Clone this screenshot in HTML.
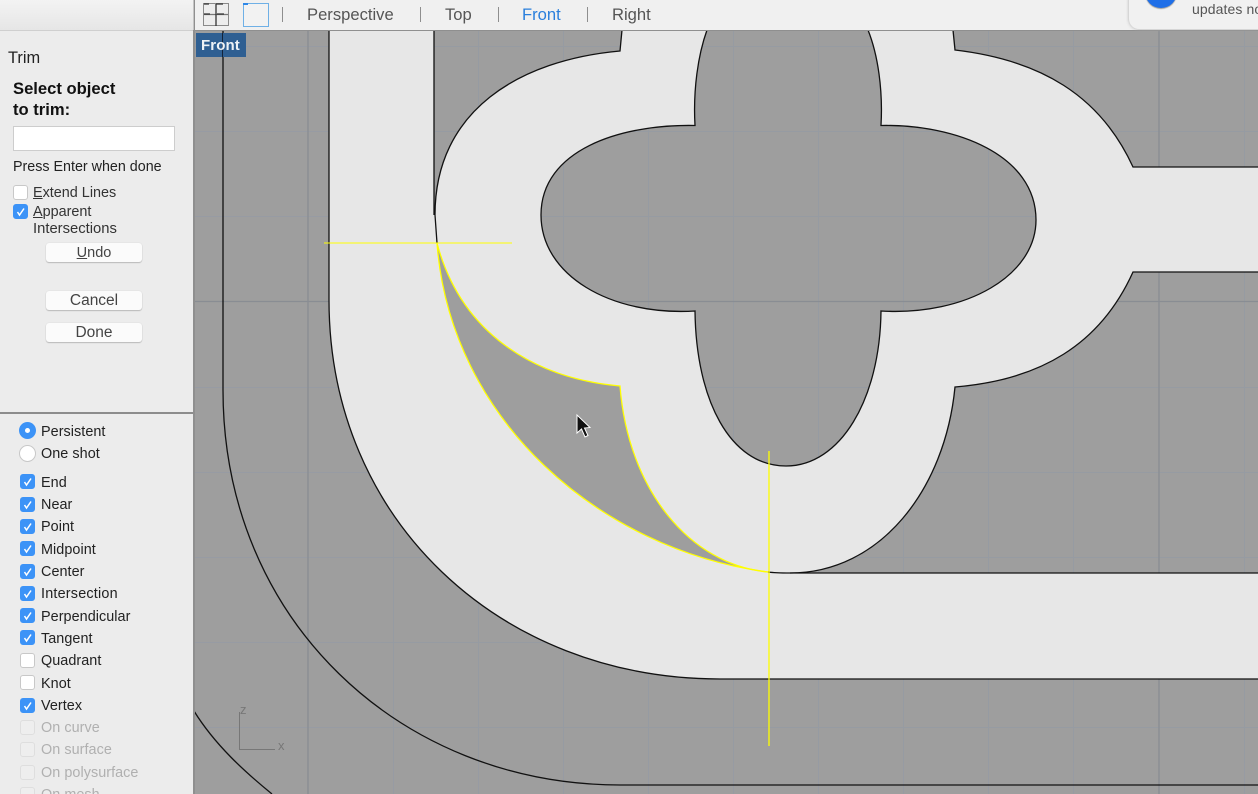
<!DOCTYPE html>
<html><head><meta charset="utf-8"><style>
html,body{margin:0;padding:0;width:1258px;height:794px;overflow:hidden}
body{position:relative;background:#9e9e9e;font-family:"Liberation Sans",sans-serif;color:#1c1c1c}
.a{position:absolute;white-space:nowrap;line-height:18px}
.side{position:absolute;left:0;top:0;width:193px;height:794px;background:#ececec}
.cb{position:absolute;width:13px;height:13px;background:#fff;border:1px solid #c8c8c8;border-radius:3px}
.cb.on{background:#3c93f7;border-color:#3c93f7}
.cb.on svg{position:absolute;left:0;top:0}
.cb.off{background:#eee;border-color:#dedede}
.l{position:absolute;left:41px;font-size:14.400px;line-height:18px;white-space:nowrap;color:#222;letter-spacing:.05px;margin-top:1px}
.l.off{color:#b0b0b0}
.btn{position:absolute;left:46px;width:96px;height:19px;background:#fbfbfb;border-radius:3px;box-shadow:0 1px 1px #b9b9b9,0 0 1px #c8c8c8;text-align:center;font-size:15.500px;line-height:20px;color:#444}
.tab{position:absolute;top:5px;font-size:16.600px;line-height:20px;color:#555;white-space:nowrap}
.sep{position:absolute;top:7px;width:1px;height:15px;background:#8e8e8e}
</style></head><body>
<svg width="1258" height="794" viewBox="0 0 1258 794" style="position:absolute;left:0;top:0">
<rect width="1258" height="794" fill="#9e9e9e"/>
<g stroke="#929aa6" stroke-width="1" fill="none" opacity=".6">
<path d="M393.500 30V794M478.500 30V794M563.500 30V794M648.500 30V794M733.500 30V794M818.500 30V794M903.500 30V794M988.500 30V794M1073.500 30V794M1244.500 30V794"/>
<path d="M194 46.500H1258M194 131.500H1258M194 216.500H1258M194 387.500H1258M194 472.500H1258M194 557.500H1258M194 642.500H1258M194 727.500H1258"/>
</g>
<path d="M308 30V794M1159 30V794M194 301.500H1258" stroke="#898d93" stroke-width="1.300" fill="none"/>
<path d="M329 30V300C329 520 500 679 720 679H1258V573H790C880 573 945 490 955 387C1040 380 1100 345 1133 272H1258V167H1133C1100 95 1040 60 955 50L953 30H868C878 55 883 90 881 125.500C956 124 1036 155 1036 220C1036 275 967 316 881 311C880 400 840 466 786 466C730 466 696 400 695 311C610 316 541 275 541 215C541 150 620 124 695 125.500C693 90 698 55 707 30H622L620 51C520 60 435 110 435 215L434 215V30Z" fill="#e7e7e7"/>
<path d="M437 243C460 330 530 378 620 386C628 490 690 565 768 572C600 550 450 420 437 243Z" fill="#9e9e9e"/>
<g fill="none" stroke="#111" stroke-width="1.300">
<path d="M434 30V215"/>
<path d="M329 30V300C329 520 500 679 720 679H1258"/>
<path d="M768 572C775 573 782 573 790 573H1258"/>
<path d="M790 573C880 573 945 490 955 387C1040 380 1100 345 1133 272H1258M1258 167H1133C1100 95 1040 60 955 50L953 30"/>
<path d="M622 30L620 51C520 60 435 110 435 215L437 243"/>
<path d="M868 30C878 55 883 90 881 125.500C956 124 1036 155 1036 220C1036 275 967 316 881 311C880 400 840 466 786 466C730 466 696 400 695 311C610 316 541 275 541 215C541 150 620 124 695 125.500C693 90 698 55 707 30"/>
<path d="M223 30V390C223 620 400 785 620 785H1258"/>
<path d="M194 711C215 745 245 772 272 794"/>
</g>
<g fill="none" stroke="#ffff00" stroke-width="1.300">
<path d="M437 243C460 330 530 378 620 386C628 490 690 565 768 572"/>
<path d="M437 243C450 420 600 550 768 572"/>
<path d="M324 243H512" stroke-width="1"/>
<path d="M769 451V746"/>
</g>
<path d="M239.500 712V749.500H275" fill="none" stroke="#777" stroke-width="1"/>
<text x="240" y="714" font-family="Liberation Sans" font-size="13" fill="#777">z</text>
<text x="278" y="750" font-family="Liberation Sans" font-size="13" fill="#777">x</text>
<path d="M577 415V433L581.500 429L585 437L588 435.500L584.500 428L590 427.500Z" fill="#111" stroke="#fff" stroke-width="1"/>
</svg>

<div style="position:absolute;left:196px;top:33px;width:50px;height:24px;background:#2f5f92"></div>
<div style="position:absolute;left:222px;top:33px;width:1px;height:24px;background:#12233a"></div>
<div class="a" style="left:201px;top:37px;font-size:15px;font-weight:bold;color:#eef2f6;letter-spacing:.1px">Front</div>

<div style="position:absolute;left:194px;top:0;width:1064px;height:31px;background:#f0f0f0;border-bottom:1px solid #8f8f8f;box-sizing:border-box"></div>
<svg width="30" height="28" style="position:absolute;left:200px;top:1px">
<rect x="3.500" y="2.500" width="25" height="22" fill="#ededed" stroke="#8a8a8a"/>
<path d="M4 13.500H28" stroke="#777" stroke-width="1.200" fill="none"/>
<path d="M4 13H10M17 13H24M16 3V25M4 3H9M16 3H23" stroke="#333" stroke-width="1.300" fill="none"/>
</svg>
<div style="position:absolute;left:243px;top:3px;width:24px;height:22px;border:1px solid #6fb0e6;background:#f2f2f2"></div>
<div style="position:absolute;left:243px;top:3px;width:5px;height:2px;background:#2f88e8"></div>
<div class="sep" style="left:282px"></div>
<div class="tab" style="left:307px">Perspective</div>
<div class="sep" style="left:420px"></div>
<div class="tab" style="left:445px">Top</div>
<div class="sep" style="left:498px"></div>
<div class="tab" style="left:522px;color:#2a7fdc">Front</div>
<div class="sep" style="left:587px"></div>
<div class="tab" style="left:612px">Right</div>

<div style="position:absolute;left:1129px;top:-10px;width:140px;height:39px;background:#f1f1f1;border-radius:10px;box-shadow:0 0 3px #aaa"></div>
<div style="position:absolute;left:1145px;top:-24px;width:32px;height:32px;border-radius:50%;background:#1f6fe8;box-shadow:0 1px 1px #999"></div>
<div class="a" style="left:1192px;top:0;font-size:14px;color:#555;letter-spacing:.1px">updates no</div>

<div class="side"></div>
<div style="position:absolute;left:0;top:0;width:193px;height:31px;background:linear-gradient(#f3f3f3,#e6e6e6);border-bottom:1px solid #cfcfcf;box-sizing:border-box"></div>
<div style="position:absolute;left:193px;top:0;width:2px;height:794px;background:#8f8f8f"></div>
<div style="position:absolute;left:193px;top:0;width:1px;height:30px;background:#c4c4c4"></div>
<div style="position:absolute;left:0;top:412px;width:193px;height:2px;background:#8c8c8c"></div>

<div class="a" style="left:8px;top:49px;font-size:16.400px;color:#222">Trim</div>
<div class="a" style="left:13px;top:80px;font-size:16.600px;font-weight:bold;color:#111">Select object</div>
<div class="a" style="left:13px;top:101px;font-size:16.600px;font-weight:bold;color:#111">to trim:</div>
<div style="position:absolute;left:13px;top:126px;width:160px;height:23px;background:#fff;border:1px solid #cdcdcd"></div>
<div class="a" style="left:13px;top:158px;font-size:14.300px;color:#222">Press Enter when done</div>

<div class="cb" style="left:13px;top:185px"></div>
<div class="a" style="left:33px;top:184px;font-size:14.400px;color:#333"><u>E</u>xtend Lines</div>
<div class="cb on" style="left:13px;top:204px"><svg width="13" height="13"><path d="M3.500 7L5.500 10L10 3.500" fill="none" stroke="#fff" stroke-width="1.500"/></svg></div>
<div class="a" style="left:33px;top:203px;font-size:14.400px;color:#333"><u>A</u>pparent</div>
<div class="a" style="left:33px;top:220px;font-size:14.800px;color:#333">Intersections</div>

<div class="btn" style="top:243px;font-size:14.500px"><u>U</u>ndo</div>
<div class="btn" style="top:291px">Cancel</div>
<div class="btn" style="top:323px">Done</div>

<div style="position:absolute;left:19px;top:422px;width:17px;height:17px;border-radius:50%;background:#3c93f7"></div>
<div style="position:absolute;left:25px;top:428px;width:5px;height:5px;border-radius:50%;background:#fff"></div>
<div class="l" style="top:422px">Persistent</div>
<div style="position:absolute;left:19px;top:445px;width:15px;height:15px;border-radius:50%;background:#fff;border:1px solid #c8c8c8"></div>
<div class="l" style="top:444px">One shot</div>

<div class="cb on" style="left:20px;top:474px"><svg width="13" height="13"><path d="M3.500 7L5.500 10L10 3.500" fill="none" stroke="#fff" stroke-width="1.500"/></svg></div><div class="l" style="top:473px">End</div>
<div class="cb on" style="left:20px;top:497px"><svg width="13" height="13"><path d="M3.500 7L5.500 10L10 3.500" fill="none" stroke="#fff" stroke-width="1.500"/></svg></div><div class="l" style="top:495px">Near</div>
<div class="cb on" style="left:20px;top:519px"><svg width="13" height="13"><path d="M3.500 7L5.500 10L10 3.500" fill="none" stroke="#fff" stroke-width="1.500"/></svg></div><div class="l" style="top:517px">Point</div>
<div class="cb on" style="left:20px;top:541px"><svg width="13" height="13"><path d="M3.500 7L5.500 10L10 3.500" fill="none" stroke="#fff" stroke-width="1.500"/></svg></div><div class="l" style="top:540px">Midpoint</div>
<div class="cb on" style="left:20px;top:564px"><svg width="13" height="13"><path d="M3.500 7L5.500 10L10 3.500" fill="none" stroke="#fff" stroke-width="1.500"/></svg></div><div class="l" style="top:562px">Center</div>
<div class="cb on" style="left:20px;top:586px"><svg width="13" height="13"><path d="M3.500 7L5.500 10L10 3.500" fill="none" stroke="#fff" stroke-width="1.500"/></svg></div><div class="l" style="top:584px;letter-spacing:.2px">Intersection</div>
<div class="cb on" style="left:20px;top:608px"><svg width="13" height="13"><path d="M3.500 7L5.500 10L10 3.500" fill="none" stroke="#fff" stroke-width="1.500"/></svg></div><div class="l" style="top:607px">Perpendicular</div>
<div class="cb on" style="left:20px;top:630px"><svg width="13" height="13"><path d="M3.500 7L5.500 10L10 3.500" fill="none" stroke="#fff" stroke-width="1.500"/></svg></div><div class="l" style="top:629px">Tangent</div>
<div class="cb" style="left:20px;top:653px"></div><div class="l" style="top:651px">Quadrant</div>
<div class="cb" style="left:20px;top:675px"></div><div class="l" style="top:674px">Knot</div>
<div class="cb on" style="left:20px;top:698px"><svg width="13" height="13"><path d="M3.500 7L5.500 10L10 3.500" fill="none" stroke="#fff" stroke-width="1.500"/></svg></div><div class="l" style="top:696px">Vertex</div>
<div class="cb off" style="left:20px;top:720px"></div><div class="l off" style="top:718px">On curve</div>
<div class="cb off" style="left:20px;top:742px"></div><div class="l off" style="top:740px">On surface</div>
<div class="cb off" style="left:20px;top:765px"></div><div class="l off" style="top:763px">On polysurface</div>
<div class="cb off" style="left:20px;top:787px"></div><div class="l off" style="top:785px">On mesh</div>
</body></html>
